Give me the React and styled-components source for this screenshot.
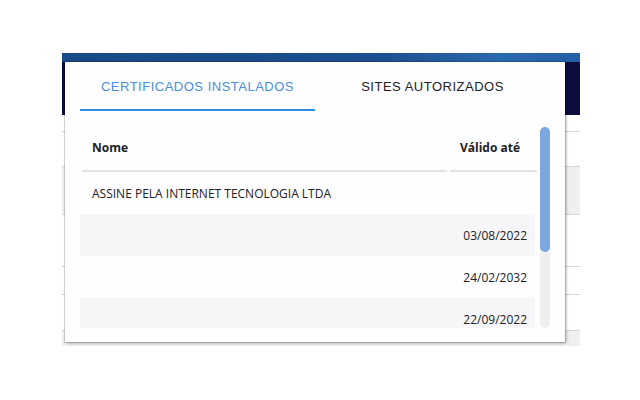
import React, { useState } from 'react';
import styled, { createGlobalStyle } from 'styled-components';

const GlobalStyle = createGlobalStyle`
  html, body {
    margin: 0;
    padding: 0;
    background: #ffffff;
  }
`;

const certificados = [
  { nome: 'ASSINE PELA INTERNET TECNOLOGIA LTDA', validade: '' },
  { nome: '', validade: '03/08/2022' },
  { nome: '', validade: '24/02/2032' },
  { nome: '', validade: '22/09/2022' },
];

// page that sits behind the extension popup
const Stage = styled.div`
  padding: 53px 0 0 62px;
`;

const BackPage = styled.div`
  position: relative;
  width: 518px;
  display: flex;
  flex-direction: column;
`;

const TopBand = styled.div`
  height: 9px;
  background: linear-gradient(90deg, #174a86 0%, #1b4f8d 60%, #2b69ad 85%, #2460a3 100%);
`;

const NavyBar = styled.div`
  height: 53px;
  background: #0c0c3f;
`;

const BackRow = styled.div`
  height: ${(p) => p.h}px;
  background: ${(p) => (p.shade ? '#efefef' : '#ffffff')};
  border-bottom: ${(p) => (p.last ? 'none' : '1px solid #d6d6d6')};
`;

const Popup = styled.div`
  position: absolute;
  left: 3px;
  top: 9px;
  width: 500px;
  height: 280px;
  box-sizing: border-box;
  background: #fefdff;
  box-shadow: 0 0 0 1px rgba(0, 0, 0, 0.12), 1px 1px 3px rgba(0, 0, 0, 0.35);
  padding: 0 15px 14px 15px;
  display: flex;
  flex-direction: column;
`;

const Tabs = styled.div`
  display: flex;
  height: 49px;
`;

const Tab = styled.button`
  flex: 1;
  border: none;
  background: transparent;
  padding: 2px 0 0;
  font-family: 'Liberation Sans', Arial, sans-serif;
  font-size: 13px;
  letter-spacing: 0.5px;
  color: ${(p) => (p.active ? '#4b8fdb' : '#222222')};
  border-bottom: 2px solid ${(p) => (p.active ? '#2f8ee0' : 'transparent')};
  cursor: pointer;
`;

const Body = styled.div`
  margin-top: 16px;
  height: 201px;
  display: flex;
  gap: 3px;
`;

const Scroller = styled.div`
  flex: 1;
  overflow: hidden;
`;

const Track = styled.div`
  width: 10px;
  border-radius: 5px;
  background: #efefef;
`;

const Thumb = styled.div`
  width: 10px;
  border-radius: 5px;
  background: #7ba8e0;
`;

const List = styled.div`
  font-family: 'Open Sans', 'Noto Sans', sans-serif;
  font-size: 12px;
  color: #222222;
`;

const HeadRow = styled.div`
  display: flex;
  gap: 3px;
  padding-left: 2px;
`;

const HeadCell = styled.div`
  width: ${(p) => p.w}px;
  height: 45px;
  box-sizing: border-box;
  display: flex;
  align-items: center;
  padding: 0 0 2px 10px;
  font-weight: 700;
  border-bottom: 2px solid #e2e2e2;
`;

const Row = styled.div`
  display: flex;
  align-items: center;
  justify-content: space-between;
  height: 42px;
  width: 455px;
  box-sizing: border-box;
  padding: 0 8px 0 12px;
  background: ${(p) => (p.shade ? '#f6f5f8' : 'transparent')};
`;

export default function App() {
  const [tab, setTab] = useState(0);
  const visible = 201;
  const total = 323;

  return (
    <Stage>
      <GlobalStyle />
      <BackPage>
        <TopBand />
        <NavyBar />
        <BackRow h={16} />
        <BackRow h={34} />
        <BackRow h={47} shade />
        <BackRow h={51} />
        <BackRow h={27} />
        <BackRow h={35} />
        <BackRow h={15} shade last />

        <Popup>
          <Tabs>
            <Tab active={tab === 0} onClick={() => setTab(0)}>CERTIFICADOS INSTALADOS</Tab>
            <Tab active={tab === 1} onClick={() => setTab(1)}>SITES AUTORIZADOS</Tab>
          </Tabs>
          <Body>
            <Scroller>
              <List>
                <HeadRow>
                  <HeadCell w={365}>Nome</HeadCell>
                  <HeadCell w={87}>Válido até</HeadCell>
                </HeadRow>
                {certificados.map((c, i) => (
                  <Row key={i} shade={i % 2 === 1}>
                    <span>{c.nome}</span>
                    <span>{c.validade}</span>
                  </Row>
                ))}
              </List>
            </Scroller>
            <Track>
              <Thumb style={{ height: Math.round((visible * visible) / total) }} />
            </Track>
          </Body>
        </Popup>
      </BackPage>
    </Stage>
  );
}
